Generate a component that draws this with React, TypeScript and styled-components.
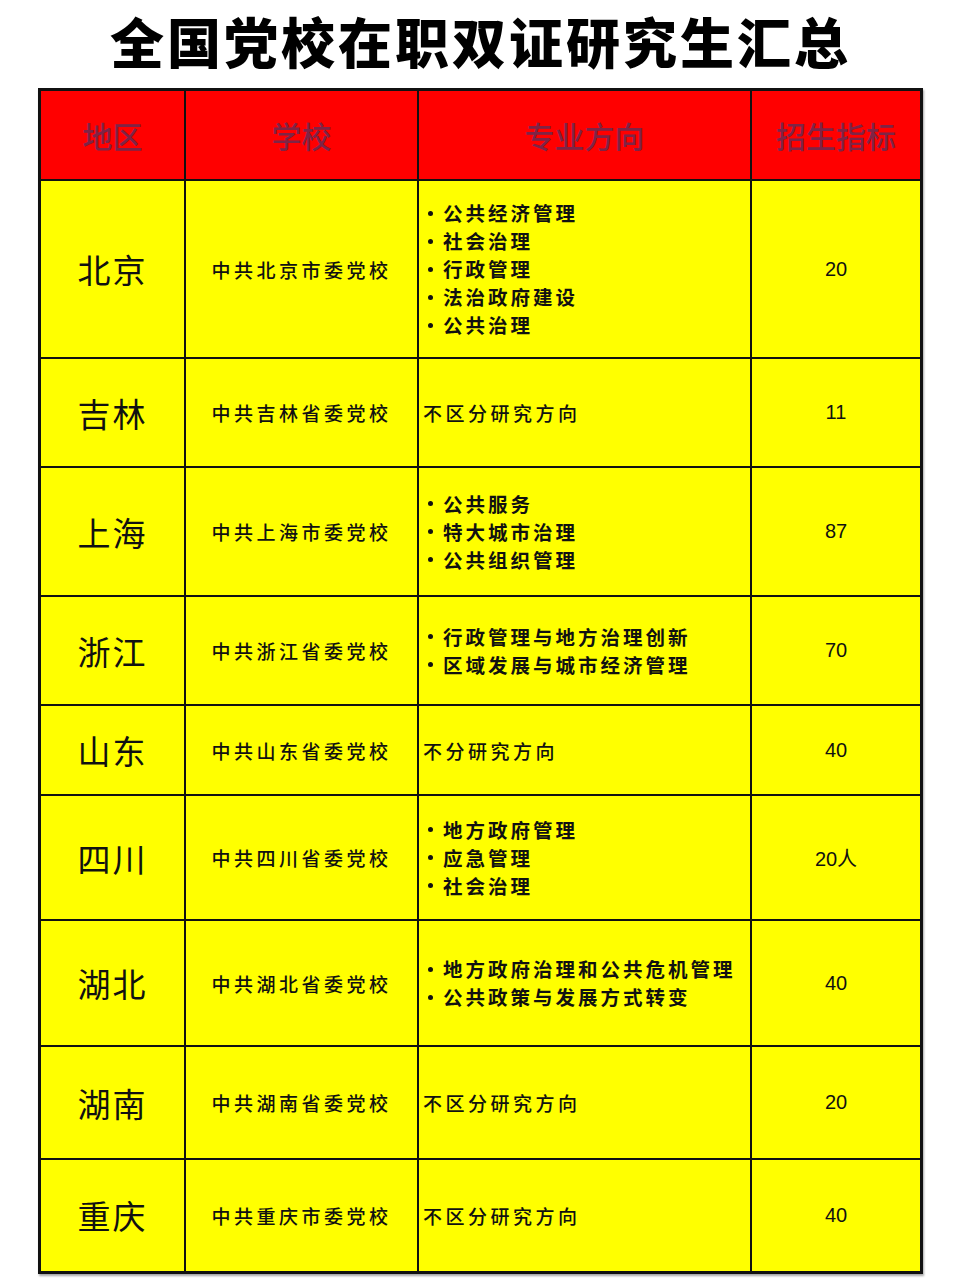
import React from 'react';
import styled, { createGlobalStyle } from 'styled-components';

const GlobalStyle = createGlobalStyle`
  body {
    margin: 0;
    background: #fff;
    font-family: "Noto Sans CJK SC", "Liberation Sans", sans-serif;
  }
`;

const Page = styled.div`
  width: 961px;
  height: 1280px;
  display: flex;
  flex-direction: column;
  align-items: center;
  background: #fff;
`;

const Title = styled.h1`
  margin: 0;
  height: 88px;
  padding-bottom: 6px;
  box-sizing: border-box;
  display: flex;
  align-items: center;
  justify-content: center;
  font-size: 54px;
  font-weight: 900;
  letter-spacing: 3px;
  color: #000;
  line-height: 60px;
  white-space: nowrap;
`;

const Table = styled.table`
  border-collapse: collapse;
  table-layout: fixed;
  border: 3px solid #111;
  box-shadow: 1px 2px 2px rgba(0, 0, 0, 0.35);
`;

const HeadCell = styled.th<{ $w: number }>`
  width: ${({ $w }) => $w}px;
  height: 88px;
  background: #ff0000;
  border: 2px solid #111;
  color: #7e2446;
  font-size: 30px;
  font-weight: 500;
  letter-spacing: 0;
  text-align: center;
  padding: 0;
`;

const Row = styled.tr<{ $h: number }>`
  height: ${({ $h }) => $h}px;
  background: #ffff00;
`;

const Cell = styled.td<{ $align?: string }>`
  border: 2px solid #111;
  padding: 0;
  text-align: ${({ $align }) => $align || 'center'};
  vertical-align: middle;
  color: #111;
`;

const Region = styled(Cell)`
  font-size: 33px;
  letter-spacing: 2px;
  font-weight: 400;
`;

const School = styled(Cell)`
  font-size: 19px;
  letter-spacing: 3.5px;
  font-weight: 500;
`;

const Plain = styled.div`
  padding-left: 4px;
  font-size: 19px;
  letter-spacing: 3.5px;
  font-weight: 500;
`;

const List = styled.ul`
  list-style: none;
  margin: 0;
  padding: 0 0 0 9px;
`;

const Item = styled.li`
  display: flex;
  align-items: center;
  font-size: 19.5px;
  line-height: 28px;
  letter-spacing: 3px;
  font-weight: 600;
  &::before {
    content: '';
    width: 5px;
    height: 5px;
    border-radius: 50%;
    background: #111;
    margin-right: 10px;
  }
`;

const Num = styled(Cell)`
  font-family: "Liberation Sans", "Noto Sans CJK SC", sans-serif;
  font-size: 20px;
`;

type RowData = {
  region: string;
  school: string;
  majors: string[] | string;
  quota: string;
  h: number;
};

const rows: RowData[] = [
  { region: '北京', school: '中共北京市委党校', majors: ['公共经济管理', '社会治理', '行政管理', '法治政府建设', '公共治理'], quota: '20', h: 178 },
  { region: '吉林', school: '中共吉林省委党校', majors: '不区分研究方向', quota: '11', h: 109 },
  { region: '上海', school: '中共上海市委党校', majors: ['公共服务', '特大城市治理', '公共组织管理'], quota: '87', h: 129 },
  { region: '浙江', school: '中共浙江省委党校', majors: ['行政管理与地方治理创新', '区域发展与城市经济管理'], quota: '70', h: 109 },
  { region: '山东', school: '中共山东省委党校', majors: '不分研究方向', quota: '40', h: 90 },
  { region: '四川', school: '中共四川省委党校', majors: ['地方政府管理', '应急管理', '社会治理'], quota: '20人', h: 125 },
  { region: '湖北', school: '中共湖北省委党校', majors: ['地方政府治理和公共危机管理', '公共政策与发展方式转变'], quota: '40', h: 126 },
  { region: '湖南', school: '中共湖南省委党校', majors: '不区分研究方向', quota: '20', h: 113 },
  { region: '重庆', school: '中共重庆市委党校', majors: '不区分研究方向', quota: '40', h: 113 },
];

const App = () => (
  <>
    <GlobalStyle />
    <Page>
      <Title>全国党校在职双证研究生汇总</Title>
      <Table>
        <thead>
          <tr>
            <HeadCell $w={143}>地区</HeadCell>
            <HeadCell $w={231}>学校</HeadCell>
            <HeadCell $w={331}>专业方向</HeadCell>
            <HeadCell $w={168}>招生指标</HeadCell>
          </tr>
        </thead>
        <tbody>
          {rows.map((r) => (
            <Row key={r.region} $h={r.h}>
              <Region>{r.region}</Region>
              <School>{r.school}</School>
              <Cell $align="left">
                {typeof r.majors === 'string' ? (
                  <Plain>{r.majors}</Plain>
                ) : (
                  <List>
                    {r.majors.map((m) => (
                      <Item key={m}>{m}</Item>
                    ))}
                  </List>
                )}
              </Cell>
              <Num>{r.quota}</Num>
            </Row>
          ))}
        </tbody>
      </Table>
    </Page>
  </>
);

export default App;
